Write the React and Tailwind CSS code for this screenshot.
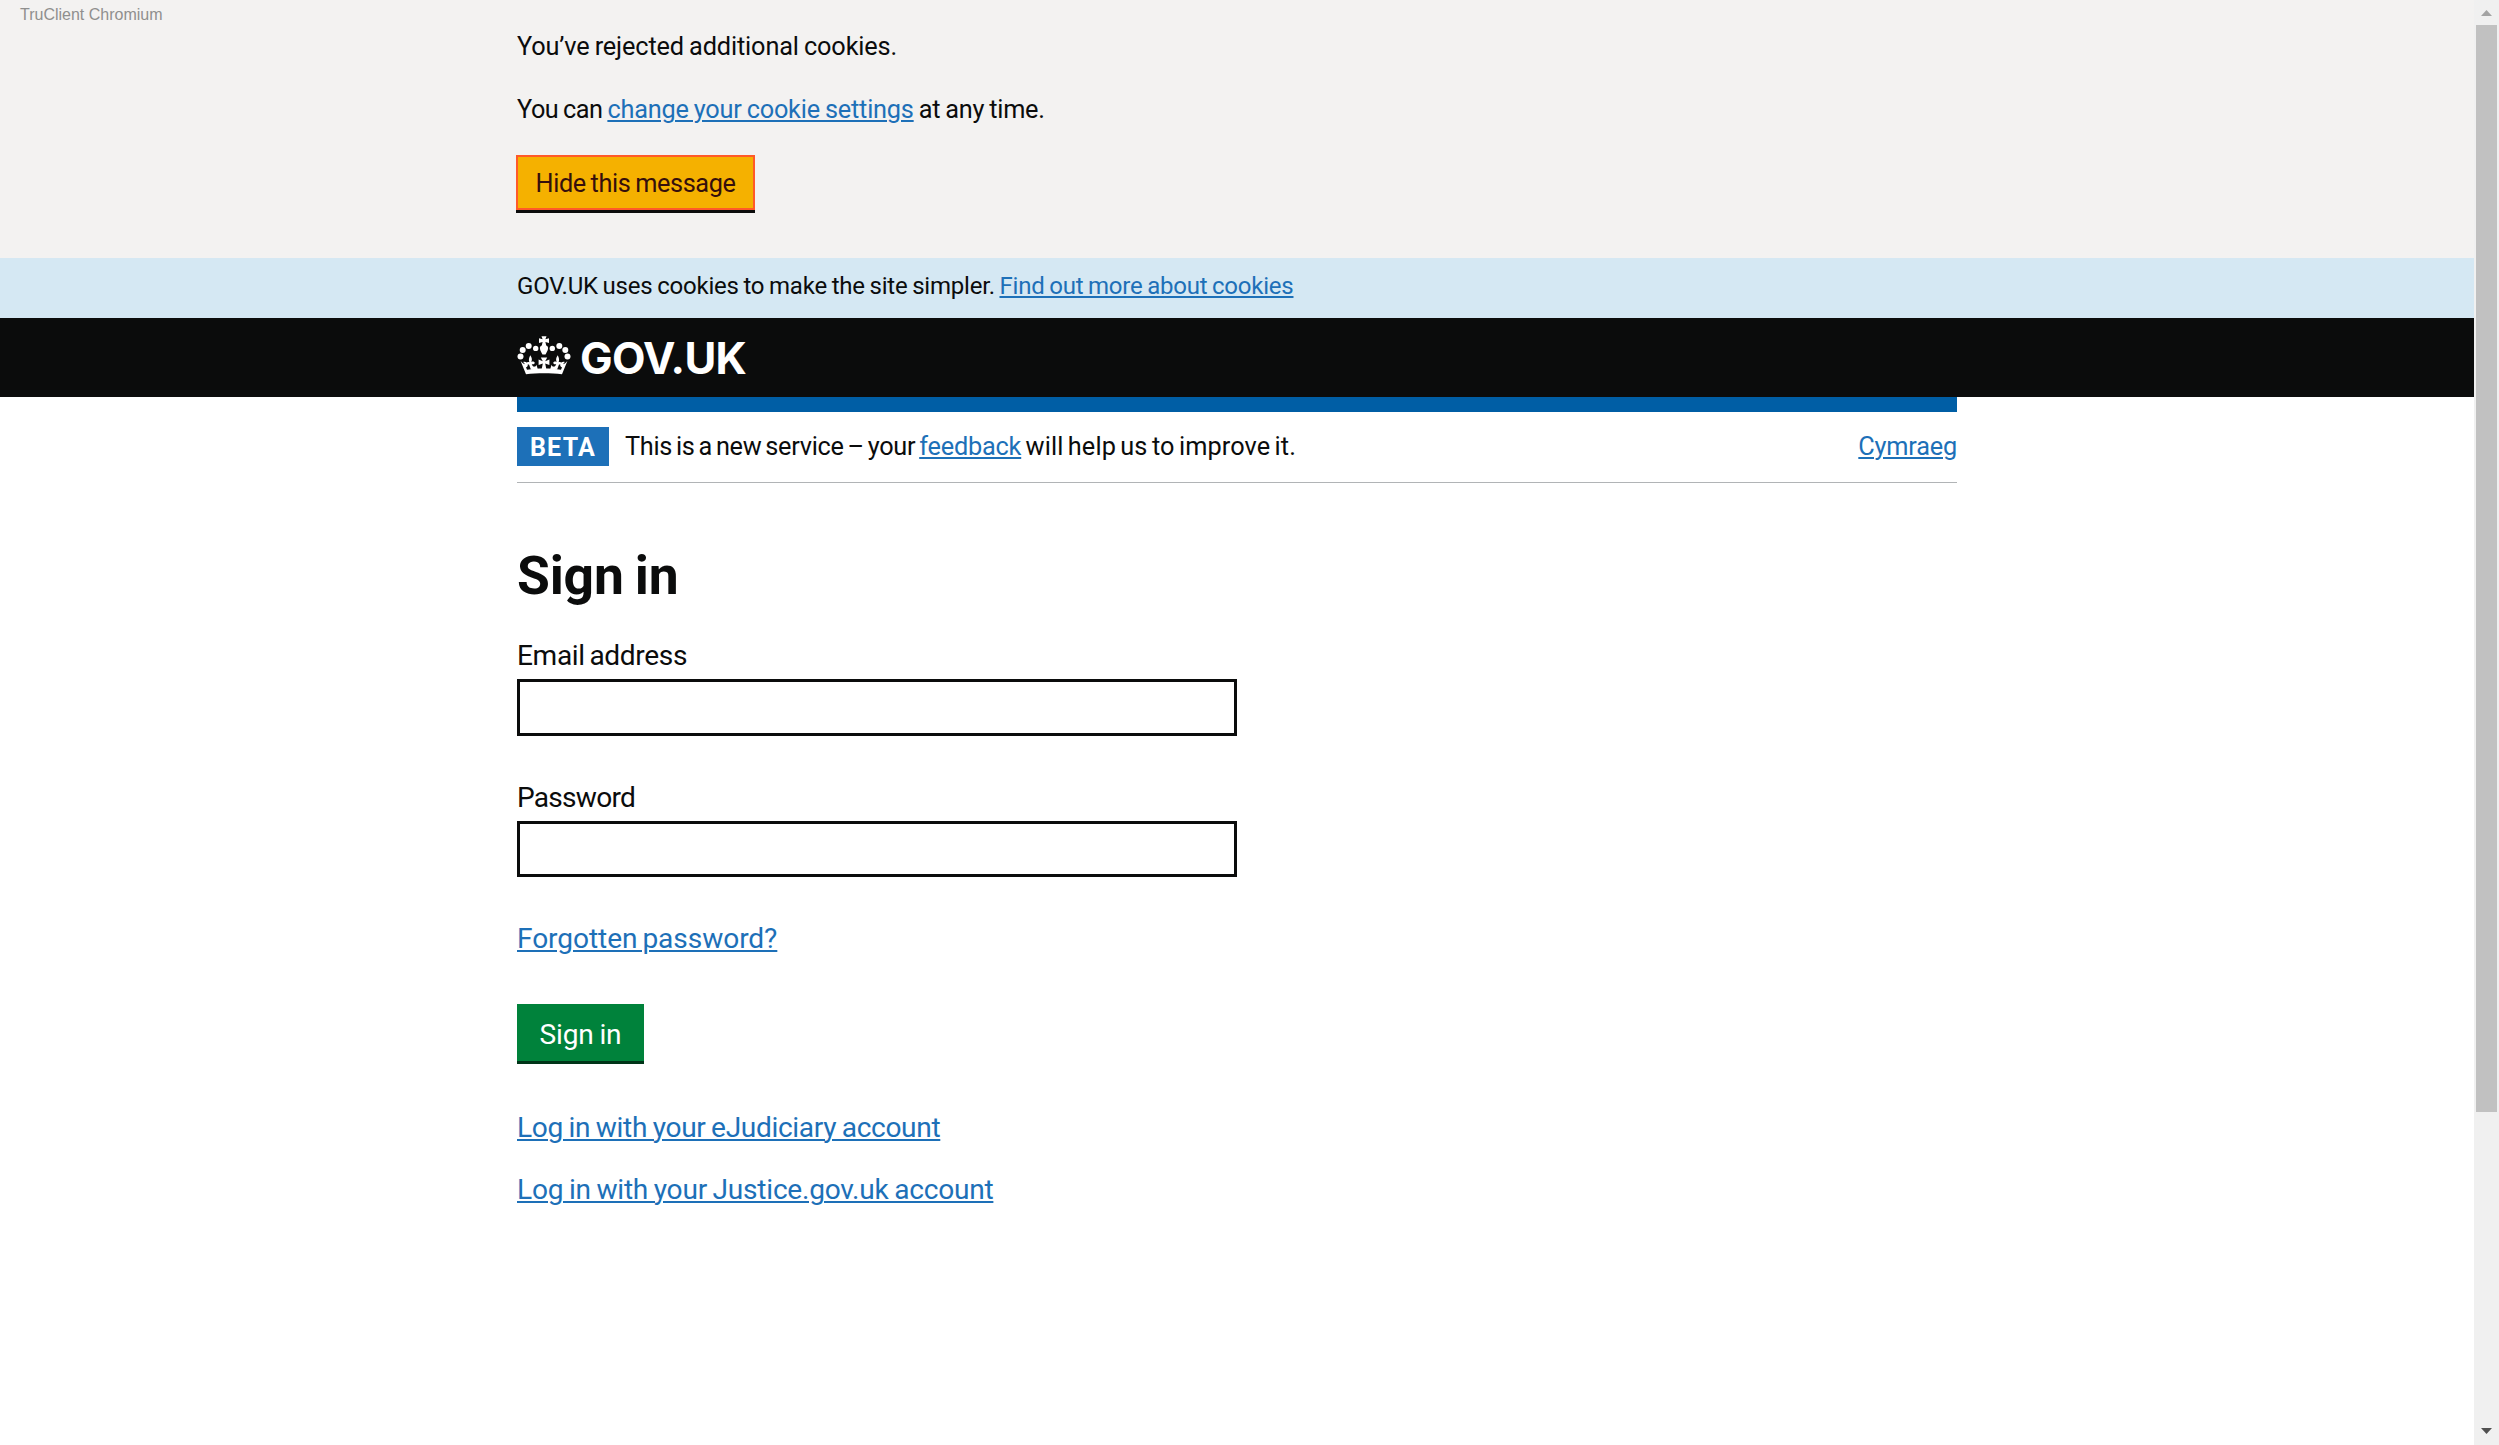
import React from 'react';

function Crown() {
  return (
    <svg viewBox="0 0 64 50" className="w-16 h-[50px] -ml-[5px] shrink-0" fill="#fff" aria-hidden="true">
      <circle cx="8.5" cy="26.4" r="3" />
      <circle cx="10.7" cy="20" r="3" />
      <circle cx="16.7" cy="16" r="3" />
      <circle cx="23.7" cy="18.4" r="2.7" />
      <circle cx="40.3" cy="18.4" r="2.7" />
      <circle cx="47.3" cy="16" r="3" />
      <circle cx="53.3" cy="20" r="3" />
      <circle cx="55.5" cy="26.4" r="3" />
      <path d="M29.5 6.3h5l-1.100 3 3.600-1v4.800l-3.600-1.100.8 3.600c1.500.6 2.100 1.800 1.800 3.300-.4 2-1.600 3.700-2.500 5.700h-3c-.9-2-2.100-3.700-2.500-5.700-.3-1.500.3-2.700 1.800-3.300l.8-3.600-3.600 1.100V8.300l3.600 1z" />
      {/* rim and outer arms */}
      <path d="M14 44.300 8.600 31c1.300 1.600 2.600 2.800 4.200 3.200-.3-1-.9-1.600-1.700-2.200 2.200-.8 4.300.3 4.700 2.300.3 1.600-.5 2.800-1.800 2.900l1 2.600c5.500-.9 11-1.200 17-1.200s11.500.3 17 1.200l1-2.600c-1.300-.1-2.100-1.300-1.800-2.900.4-2 2.500-3.100 4.700-2.300-.8.6-1.400 1.200-1.700 2.200 1.600-.4 2.900-1.600 4.200-3.200L50 44.300c-5.500-.7-12-1-18-1s-12.500.3-18 1z" />
      {/* fleurs */}
      <path d="M18.300 25.200c1.900 2.900 2 4.800.9 6.800 1.300-.8 3-.5 3.600.8-.4 1.400-1.700 1.900-3 1.300.6 2 1.600 2.700 2.800 2.500 1-.2 1.600-.9 1.900-1.900l1.200 4.200-6.700.8-2-5.300c-1 .4-2.200 0-2.600-1.300.6-1.100 1.800-1.500 3-.8-.9-2.200-.6-4.100.9-7.100z" />
      <path d="M45.700 25.200c-1.900 2.900-2 4.800-.9 6.800-1.300-.8-3-.5-3.600.8.4 1.400 1.700 1.900 3 1.300-.6 2-1.600 2.700-2.800 2.500-1-.2-1.600-.9-1.900-1.900l-1.200 4.200 6.700.8 2-5.300c1 .4 2.200 0 2.600-1.300-.6-1.100-1.800-1.500-3-.8.9-2.200.6-4.100-.9-7.100z" />
      {/* centre cross */}
      <path d="M28.800 27.500h6.400l-2 3.700 4.200-1.700v5.600l-4.200-1.700 1.200 6h-4.800l1.200-6-4.200 1.700v-5.600l4.200 1.700z" />
    </svg>
  );
}

function Link({ children, className = '' }) {
  return (
    <a href="#" className={`text-[#1d70b8] underline decoration-2 underline-offset-[2px] ${className}`}>
      {children}
    </a>
  );
}

function Container({ children, className = '' }) {
  return <div className={`w-[1440px] ml-[517px] ${className}`}>{children}</div>;
}

function CookieMessage() {
  return (
    <section className="relative h-[258px] bg-[#f3f2f1] pt-8 text-[25.3px] leading-[30px]">
      <span className="absolute left-5 top-[5px] font-['Liberation_Sans',sans-serif] text-[16px] leading-5 text-[#8f8f8e] [word-spacing:0]">
        TruClient Chromium
      </span>
      <Container>
        <p className="tracking-[-0.14px] [word-spacing:-1px]">You’ve rejected additional cookies.</p>
        <p className="mt-[33px] [word-spacing:-1px]">
          <span className="tracking-[-0.49px]">You can </span>
          <Link className="tracking-[-0.21px]">change your cookie settings</Link>
          <span className="tracking-[-0.25px]"> at any time.</span>
        </p>
        <button className="mt-[30px] -ml-px flex h-[55px] w-[239px] justify-center border-2 border-[#ff5a28] bg-[#f5b100] pt-3 tracking-[-0.41px] [word-spacing:-1px] text-[#350f0c] shadow-[0_3px_0_#0b0c0c]">
          Hide this message
        </button>
      </Container>
    </section>
  );
}

function Header() {
  return (
    <header>
      <div className="h-[60px] bg-[#d5e8f3] pt-[13px] text-[24px] leading-[30px]">
        <Container className="[word-spacing:-1px]">
          <span className="tracking-[-0.22px]">GOV.UK uses cookies to make the site simpler. </span>
          <Link className="tracking-[-0.23px]">Find out more about cookies</Link>
        </Container>
      </div>
      <div className="h-[79px] bg-[#0b0c0c]">
        <Container className="flex pt-3">
          <Crown />
          <span className="ml-1 mt-px font-['Inter',sans-serif] text-[43.5px] font-bold leading-[54px] tracking-[-0.7px] text-white">
            GOV.UK
          </span>
        </Container>
      </div>
    </header>
  );
}

function PhaseBanner() {
  return (
    <div className="h-[86px] border-t-[15px] border-b border-t-[#005ea5] border-b-[#b1b4b6] pt-[15px] text-[25.3px] leading-[30px]">
      <div className="flex">
        <strong className="h-[39px] w-[92px] bg-[#1d70b8] pt-px text-center text-[25px] leading-[39px] tracking-[1.25px] text-white">
          BETA
        </strong>
        <p className="ml-4 mt-[5px]">
          <span className="tracking-[-0.31px]">This is a new service – your </span>
          <Link className="tracking-[-0.2px]">feedback</Link>
          <span className="tracking-[0.1px]"> will help us to improve it.</span>
        </p>
        <Link className="ml-auto mt-[5px] tracking-[-0.2px]">Cymraeg</Link>
      </div>
    </div>
  );
}

function SignIn() {
  return (
    <main className="flex flex-col items-start text-[28.1px] leading-9">
      <h1 className="mt-[63px] text-[53.4px] font-bold leading-[60px] tracking-[-0.2px]">Sign in</h1>
      <label htmlFor="email" className="mt-8 tracking-[-0.35px]">Email address</label>
      <input id="email" className="mt-[5px] h-[57px] w-[720px] border-[3px] border-[#0b0c0c]" />
      <label htmlFor="password" className="mt-11 tracking-[-0.75px]">Password</label>
      <input id="password" type="password" className="mt-[5px] h-[56px] w-[720px] border-[3px] border-[#0b0c0c]" />
      <Link className="mt-11 tracking-[-0.07px]">Forgotten password?</Link>
      <button className="mt-[47px] flex h-[57px] w-[127px] justify-center bg-[#00823b] pt-[13px] tracking-[-0.17px] [word-spacing:-1px] text-white shadow-[0_3px_0_#003418]">
        Sign in
      </button>
      <Link className="mt-[49px] tracking-[-0.34px] [word-spacing:-1px]">Log in with your eJudiciary account</Link>
      <Link className="mt-[26px] tracking-[-0.25px] [word-spacing:-1px]">Log in with your Justice.gov.uk account</Link>
    </main>
  );
}

function Scrollbar() {
  return (
    <div className="flex w-[25px] flex-col items-center bg-[#f0f0f0]">
      <svg className="mt-2.5 h-1.5 w-[11px]" viewBox="0 0 11 6" fill="#a3a3a3"><path d="M5.500 0 11 6H0z" /></svg>
      <div className="mt-[9px] h-[1087px] w-[21px] bg-[#c1c1c1]" />
      <svg className="mb-[11px] mt-auto h-1.5 w-[11px]" viewBox="0 0 11 6" fill="#505050"><path d="M0 0h11L5.500 6z" /></svg>
    </div>
  );
}

export default function App() {
  return (
    <div className="flex h-[1445px] w-[2499px] overflow-hidden bg-white font-['Roboto',sans-serif] text-[#0b0c0c] [word-spacing:-2px]">
      <div className="w-[2474px]">
        <CookieMessage />
        <Header />
        <Container>
          <PhaseBanner />
          <SignIn />
        </Container>
      </div>
      <Scrollbar />
    </div>
  );
}
